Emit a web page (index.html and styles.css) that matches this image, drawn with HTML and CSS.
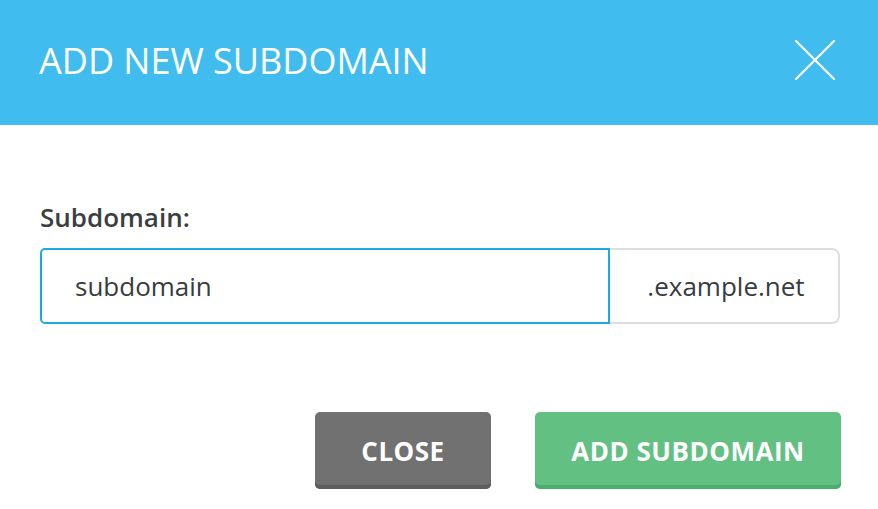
FILE: index.html
```html
<!DOCTYPE html>
<html lang="en">
<head>
    <meta charset="UTF-8">
    <meta name="viewport" content="width=device-width, initial-scale=1.0">
    <title>Add new subdomain</title>
    <link rel="stylesheet" href="styles.css">
</head>
<body>

    <div class="modal">
        <div class="modal-header">
            <h1>ADD NEW SUBDOMAIN</h1>
            <button class="close-x" aria-label="Close">
                <svg width="42" height="42" viewBox="0 0 42 42">
                    <path d="M2 2 L40 40 M40 2 L2 40" stroke="#fff" stroke-width="2.2" stroke-linecap="round" fill="none"/>
                </svg>
            </button>
        </div>

        <div class="modal-body">
            <label for="subdomain">Subdomain:</label>
            <div class="input-group">
                <input type="text" id="subdomain" value="subdomain">
                <span class="addon">.example.net</span>
            </div>
        </div>

        <div class="modal-footer">
            <button class="btn btn-gray">CLOSE</button>
            <button class="btn btn-green">ADD SUBDOMAIN</button>
        </div>
    </div>

</body>
</html>
```

FILE: styles.css
```css
body {
    margin: 0;
    font-family: "Open Sans", "Liberation Sans", sans-serif;
    background: #fff;
    color: #383c40;
}

.modal-header {
    height: 125px;
    background: #41bcef;
    display: flex;
    align-items: center;
    justify-content: space-between;
    padding: 0 42px 0 39px;
    box-sizing: border-box;
}

.modal-header h1 {
    margin: 0;
    color: #fff;
    font-size: 36px;
    font-weight: 400;
    letter-spacing: 0;
    padding-bottom: 5px;
}

.close-x {
    background: none;
    border: none;
    padding: 0;
    width: 42px;
    height: 42px;
    cursor: pointer;
    margin-bottom: 6px;
}

.modal-body {
    padding: 74px 38px 0 40px;
}

.modal-body label {
    display: block;
    font-size: 26px;
    font-weight: 600;
    color: #3a3e42;
    margin-bottom: 13px;
}

.input-group {
    display: flex;
    height: 76px;
}

.input-group input {
    flex: 1;
    border: 2px solid #1ea9e2;
    border-radius: 5px 0 0 5px;
    padding: 0 33px;
    font-family: inherit;
    font-size: 26px;
    color: #383c40;
    outline: none;
    margin: 0;
    height: 76px;
    box-sizing: border-box;
}

.addon {
    width: 230px;
    box-sizing: border-box;
    border: 2px solid #dedede;
    border-left: none;
    border-radius: 0 8px 8px 0;
    display: flex;
    align-items: center;
    justify-content: center;
    padding-left: 4px;
    font-size: 26px;
    color: #383c40;
}

.modal-footer {
    display: flex;
    justify-content: flex-end;
    gap: 44px;
    padding: 88px 37px 0 0;
}

.btn {
    height: 77px;
    border: none;
    border-radius: 5px;
    color: #fff;
    font-family: inherit;
    font-size: 26px;
    font-weight: 700;
    letter-spacing: 0.5px;
    cursor: pointer;
    padding-top: 2px;
}

.btn-gray {
    width: 176px;
    background: #707170;
    box-shadow: inset 0 -4px 0 #5c5d5c;
}

.btn-green {
    width: 306px;
    background: #62c083;
    box-shadow: inset 0 -4px 0 #4cae6c;
}
```
